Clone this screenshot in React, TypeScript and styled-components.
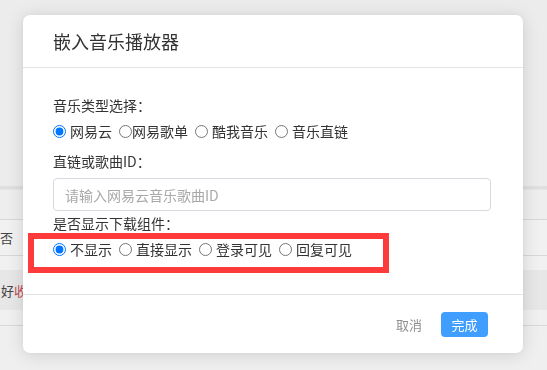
import React from "react";
import styled, { createGlobalStyle } from "styled-components";

const Global = createGlobalStyle`
  html, body { margin: 0; padding: 0; }
  body {
    background: #efefef;
    font-family: "Noto Sans CJK SC", "Noto Sans", sans-serif;
    overflow: hidden;
  }
`;

const Page = styled.div`
  width: 547px;
  height: 370px;
  display: flex;
  flex-direction: column;
  background: #efefef;
`;

const TopArea = styled.div`
  height: 186px;
  background: #ececec;
`;

const HeaderShadow = styled.div`
  height: 4px;
  background: linear-gradient(#e2e2e2, #dcdcdc 50%, #e9e9e9);
`;

const BgRow = styled.div<{ $h: number; $bg: string; $line?: boolean }>`
  height: ${(p) => p.$h}px;
  background: ${(p) => p.$bg};
  border-bottom: ${(p) => (p.$line ? "1px solid #d8d8d8" : "none")};
  display: flex;
  align-items: center;
  font-size: 13px;
  color: #444;
  white-space: nowrap;
  overflow: hidden;
`;

const BgText = styled.span<{ $shift: number }>`
  margin-left: ${(p) => p.$shift}px;
`;

const Red = styled.span`
  color: #c4474f;
`;

const Modal = styled.div`
  position: fixed;
  left: 23px;
  top: 15px;
  width: 500px;
  background: #fff;
  border-radius: 7px;
  box-shadow: 0 2px 18px rgba(0, 0, 0, 0.13), 0 0 4px rgba(0, 0, 0, 0.05);
  display: flex;
  flex-direction: column;
  color: #333;
`;

const Header = styled.div`
  height: 52px;
  border-bottom: 1px solid #e3e3e3;
  display: flex;
  align-items: center;
  padding: 0 30px;
  font-size: 18px;
  line-height: 24px;
  color: #333;
`;

const Body = styled.div`
  padding: 27px 32px 35px 30px;
  display: flex;
  flex-direction: column;
`;

const FieldLabel = styled.div<{ $mt: number }>`
  margin-top: ${(p) => p.$mt}px;
  font-size: 14px;
  line-height: 20px;
  height: 20px;
  color: #333;
`;

const RadioRow = styled.div<{ $mt: number }>`
  position: relative;
  margin-top: ${(p) => p.$mt}px;
  height: 20px;
  display: flex;
  align-items: center;
  font-size: 14px;
  line-height: 20px;
  color: #333;
`;

const Option = styled.label<{ $tight?: boolean; $last?: boolean }>`
  display: inline-flex;
  align-items: center;
  margin-right: ${(p) => (p.$last ? 0 : 7)}px;
  white-space: nowrap;
  input {
    margin: 0 ${(p) => (p.$tight ? 0 : 4)}px 0 0;
    width: 13px;
    height: 13px;
  }
`;

const Input = styled.input`
  margin-top: 7px;
  box-sizing: border-box;
  width: 438px;
  height: 33px;
  border: 1px solid #d6d9e0;
  border-radius: 4px;
  padding: 0 11px;
  font-family: inherit;
  font-size: 14px;
  color: #333;
  outline: none;
  &::placeholder {
    color: #a8a8a8;
  }
`;

const Highlight = styled.div`
  position: absolute;
  left: -25px;
  top: -6px;
  width: 361px;
  height: 40px;
  box-sizing: border-box;
  border: 6px solid #fe3a3a;
  pointer-events: none;
`;

const Footer = styled.div`
  height: 58px;
  border-top: 1px solid #e3e3e3;
  display: flex;
  align-items: center;
  justify-content: flex-end;
  padding-right: 35px;
`;

const TextButton = styled.button`
  border: none;
  background: transparent;
  padding: 0;
  margin-right: 19px;
  font-family: inherit;
  font-size: 13px;
  color: #8f8f8f;
`;

const PrimaryButton = styled.button`
  border: none;
  background: #409eff;
  color: #fff;
  width: 47px;
  height: 25px;
  border-radius: 4px;
  padding: 0;
  font-family: inherit;
  font-size: 13px;
  line-height: 25px;
`;

type Opt = { text: string; checked?: boolean; tight?: boolean };

const RadioGroup: React.FC<{ name: string; options: Opt[] }> = ({ name, options }) => (
  <>
    {options.map((o, i) => (
      <Option key={o.text} $tight={o.tight} $last={i === options.length - 1}>
        <input type="radio" name={name} defaultChecked={o.checked} />
        {o.text}
      </Option>
    ))}
  </>
);

export default function App() {
  return (
    <>
      <Global />
      <Page>
        <TopArea />
        <HeaderShadow />
        <BgRow $h={29} $bg="#eeeeee" $line />
        <BgRow $h={35} $bg="#f1f1f1" $line>
          <BgText $shift={0}>否</BgText>
        </BgRow>
        <BgRow $h={14} $bg="#f1f1f1" />
        <BgRow $h={40} $bg="#e7e7e8">
          <BgText $shift={1}>
            好<Red>收藏</Red>
          </BgText>
        </BgRow>
        <BgRow $h={15} $bg="#f0f0f0" $line />
      </Page>
      <Modal>
        <Header>嵌入音乐播放器</Header>
        <Body>
          <FieldLabel $mt={0}>音乐类型选择：</FieldLabel>
          <RadioRow $mt={6}>
            <RadioGroup
              name="type"
              options={[
                { text: "网易云", checked: true },
                { text: "网易歌单", tight: true },
                { text: "酷我音乐" },
                { text: "音乐直链" },
              ]}
            />
          </RadioRow>
          <FieldLabel $mt={10}>直链或歌曲ID：</FieldLabel>
          <Input placeholder="请输入网易云音乐歌曲ID" />
          <FieldLabel $mt={2}>是否显示下载组件：</FieldLabel>
          <RadioRow $mt={6}>
            <Highlight />
            <RadioGroup
              name="download"
              options={[
                { text: "不显示", checked: true },
                { text: "直接显示" },
                { text: "登录可见" },
                { text: "回复可见" },
              ]}
            />
          </RadioRow>
        </Body>
        <Footer>
          <TextButton>取消</TextButton>
          <PrimaryButton>完成</PrimaryButton>
        </Footer>
      </Modal>
    </>
  );
}
